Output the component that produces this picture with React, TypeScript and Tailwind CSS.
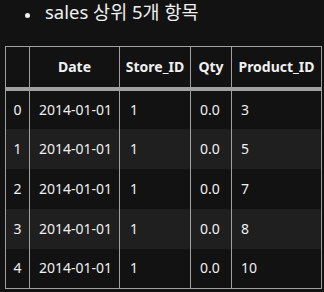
const rows = [
  { idx: 0, date: "2014-01-01", store: 1, qty: "0.0", product: 3 },
  { idx: 1, date: "2014-01-01", store: 1, qty: "0.0", product: 5 },
  { idx: 2, date: "2014-01-01", store: 1, qty: "0.0", product: 7 },
  { idx: 3, date: "2014-01-01", store: 1, qty: "0.0", product: 8 },
  { idx: 4, date: "2014-01-01", store: 1, qty: "0.0", product: 10 },
]

export default function App() {
  return (
    <div
      className="h-[292px] w-[324px] overflow-hidden bg-[#121212] text-[#f0f0f0]"
      style={{ fontFamily: '"Noto Sans", "Noto Sans CJK KR", sans-serif' }}
    >
      {/* Heading bullet */}
      <div className="flex h-[30px] items-center pl-[25px] text-[18.5px] leading-none">
        <span className="mr-[15px] h-[5px] w-[5px] rounded-full bg-[#f0f0f0]" />
        <span className="-mt-[5px]">sales 상위 5개 항목</span>
      </div>

      <div className="pl-[5px] pt-[16px]">
        <table className="w-[316px] table-fixed border-collapse text-[14px] leading-none">
          <colgroup>
            <col className="w-[24px]" />
            <col className="w-[90px]" />
            <col className="w-[71px]" />
            <col className="w-[41px]" />
            <col className="w-[90px]" />
          </colgroup>
          <thead>
            <tr className="h-[42px] border-b-4 border-[#a0a0a0]">
              <th className="border border-b-0 border-[#a0a0a0]"></th>
              <th className="border border-b-0 border-[#a0a0a0] text-center font-bold">Date</th>
              <th className="border border-b-0 border-[#a0a0a0] text-center font-bold">Store_ID</th>
              <th className="border border-b-0 border-[#a0a0a0] text-center font-bold">Qty</th>
              <th className="border border-b-0 border-[#a0a0a0] text-center font-bold">Product_ID</th>
            </tr>
          </thead>
          <tbody className="border-b border-[#a0a0a0]">
            {rows.map((r) => (
              <tr key={r.idx} className={`h-[40px] ${r.idx % 2 === 1 ? "bg-[#1f1f1f]" : "bg-[#121212]"}`}>
                <td className="border-x border-[#a0a0a0] text-center">{r.idx}</td>
                <td className="border-x border-[#a0a0a0] pl-[9px]">{r.date}</td>
                <td className="border-x border-[#a0a0a0] pl-[10px]">{r.store}</td>
                <td className="border-x border-[#a0a0a0] pl-[9px]">{r.qty}</td>
                <td className="border-x border-[#a0a0a0] pl-[9px]">{r.product}</td>
              </tr>
            ))}
          </tbody>
        </table>
      </div>
    </div>
  )
}
